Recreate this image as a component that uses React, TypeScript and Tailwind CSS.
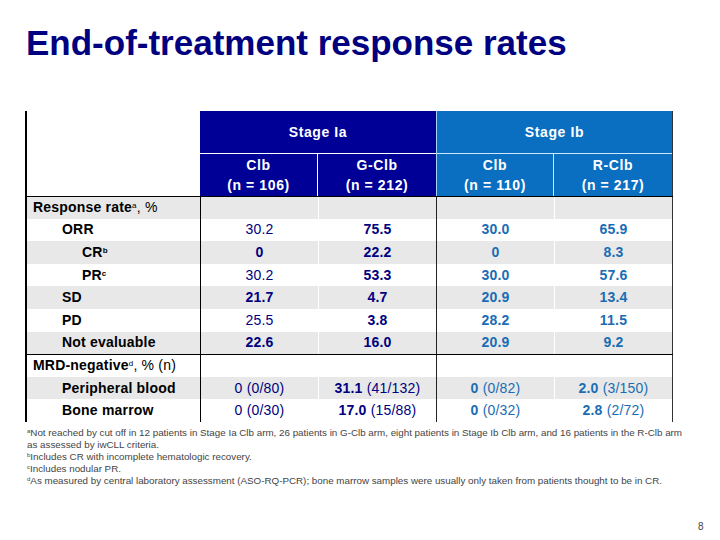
import React from "react";

type Cell = { main: string; sub?: string; bold?: boolean };
type Row = {
  label: React.ReactNode;
  indent: number;
  gray: boolean;
  topLine?: boolean;
  cells: (Cell | null)[];
};

const NAVY = "#000080";
const BLUE = "#1a6db4";

const rows: Row[] = [
  {
    label: (
      <>
        <span className="font-bold">Response rate</span>
        <sup className="text-[8px]">a</sup>, %
      </>
    ),
    indent: 6,
    gray: true,
    topLine: true,
    cells: [null, null, null, null],
  },
  {
    label: <span className="font-bold">ORR</span>,
    indent: 35,
    gray: false,
    cells: [{ main: "30.2" }, { main: "75.5", bold: true }, { main: "30.0", bold: true }, { main: "65.9", bold: true }],
  },
  {
    label: (
      <>
        <span className="font-bold">CR</span>
        <sup className="text-[8px] font-bold">b</sup>
      </>
    ),
    indent: 55,
    gray: true,
    cells: [{ main: "0", bold: true }, { main: "22.2", bold: true }, { main: "0", bold: true }, { main: "8.3", bold: true }],
  },
  {
    label: (
      <>
        <span className="font-bold">PR</span>
        <sup className="text-[8px] font-bold">c</sup>
      </>
    ),
    indent: 55,
    gray: false,
    cells: [{ main: "30.2" }, { main: "53.3", bold: true }, { main: "30.0", bold: true }, { main: "57.6", bold: true }],
  },
  {
    label: <span className="font-bold">SD</span>,
    indent: 35,
    gray: true,
    cells: [{ main: "21.7", bold: true }, { main: "4.7", bold: true }, { main: "20.9", bold: true }, { main: "13.4", bold: true }],
  },
  {
    label: <span className="font-bold">PD</span>,
    indent: 35,
    gray: false,
    cells: [{ main: "25.5" }, { main: "3.8", bold: true }, { main: "28.2", bold: true }, { main: "11.5", bold: true }],
  },
  {
    label: <span className="font-bold">Not evaluable</span>,
    indent: 35,
    gray: true,
    cells: [{ main: "22.6", bold: true }, { main: "16.0", bold: true }, { main: "20.9", bold: true }, { main: "9.2", bold: true }],
  },
  {
    label: (
      <>
        <span className="font-bold">MRD-negative</span>
        <sup className="text-[8px]">d</sup>, % (n)
      </>
    ),
    indent: 6,
    gray: false,
    topLine: true,
    cells: [null, null, null, null],
  },
  {
    label: <span className="font-bold">Peripheral blood</span>,
    indent: 35,
    gray: true,
    cells: [
      { main: "0", sub: " (0/80)" },
      { main: "31.1", sub: " (41/132)", bold: true },
      { main: "0", sub: " (0/82)", bold: true },
      { main: "2.0", sub: " (3/150)", bold: true },
    ],
  },
  {
    label: <span className="font-bold">Bone marrow</span>,
    indent: 35,
    gray: false,
    cells: [
      { main: "0", sub: " (0/30)" },
      { main: "17.0", sub: " (15/88)", bold: true },
      { main: "0", sub: " (0/32)", bold: true },
      { main: "2.8", sub: " (2/72)", bold: true },
    ],
  },
];

function DataCell({ cell, idx, gray }: { cell: Cell | null; idx: number; gray: boolean }) {
  const borders = [
    "border-l border-black",
    "border-l border-white",
    "border-l border-[#222]",
    "border-l border-white border-r border-r-[#333]",
  ][idx];
  const width = idx === 3 ? "w-[119px]" : "w-[118px]";
  const color = idx < 2 ? NAVY : BLUE;
  return (
    <div
      className={`${width} ${borders} ${gray ? "bg-[#e8e8e8]" : "bg-white"} flex h-full items-center justify-center text-[14px] tracking-[0.2px]`}
      style={{ color }}
    >
      {cell && (
        <span>
          <span className={cell.bold ? "font-bold" : "font-normal"}>{cell.main}</span>
          {cell.sub && <span className="font-normal">{cell.sub}</span>}
        </span>
      )}
    </div>
  );
}

function Fn({ mark, children }: { mark: string; children: React.ReactNode }) {
  return (
    <p>
      <span className="relative top-[-3px] text-[6px] leading-none">{mark}</span>
      {children}
    </p>
  );
}

export default function App() {
  return (
    <div
      className="relative h-[540px] w-[720px] overflow-hidden bg-white text-black"
      style={{ fontFamily: '"Liberation Sans", Arial, sans-serif' }}
    >
      <h1
        className="pl-[26px] pt-[24px] text-[35px] font-bold leading-[38px] tracking-[0px] text-[#000080]"
        style={{ fontFamily: '"Liberation Sans Narrow", "Arial Narrow", "Liberation Sans", sans-serif' }}
      >
        End-of-treatment response rates
      </h1>

      <div className="ml-[25px] mt-[49px] w-[648px] border-l-2 border-black">
        {/* header */}
        <div className="flex h-[85px] text-[14px] font-bold tracking-[0.6px] text-white">
          <div className="w-[173px] bg-white" />
          <div className="flex w-[236px] flex-col bg-[#000096]">
            <div className="flex h-[43px] items-center justify-center border-b border-white pt-[1px]">Stage Ia</div>
            <div className="flex flex-1">
              <div className="flex w-[118px] flex-col items-center justify-center border-r border-white leading-[20px]">
                <span>Clb</span>
                <span>(n = 106)</span>
              </div>
              <div className="flex flex-1 flex-col items-center justify-center leading-[20px]">
                <span>G-Clb</span>
                <span>(n = 212)</span>
              </div>
            </div>
          </div>
          <div className="flex w-[237px] flex-col border-l border-l-[#9dd3f5] border-r border-r-[#333] bg-[#0a6fc0]">
            <div className="flex h-[43px] items-center justify-center border-b border-[#cfe9fb] pt-[1px]">Stage Ib</div>
            <div className="flex flex-1">
              <div className="flex w-[117px] flex-col items-center justify-center border-r border-[#cfe9fb] leading-[20px]">
                <span>Clb</span>
                <span>(n = 110)</span>
              </div>
              <div className="flex flex-1 flex-col items-center justify-center leading-[20px]">
                <span>R-Clb</span>
                <span>(n = 217)</span>
              </div>
            </div>
          </div>
        </div>

        {/* body */}
        {rows.map((r, i) => (
          <div
            key={i}
            className={`flex h-[22.6px] ${r.topLine ? "border-t border-black" : ""}`}
          >
            <div
              className={`flex w-[173px] items-center text-[14px] tracking-[0.2px] ${r.gray ? "bg-[#e8e8e8]" : "bg-white"}`}
              style={{ paddingLeft: r.indent }}
            >
              <span className="whitespace-nowrap">{r.label}</span>
            </div>
            {r.cells.map((c, j) => (
              <DataCell key={j} cell={c} idx={j} gray={r.gray} />
            ))}
          </div>
        ))}
      </div>

      <div className="ml-[27px] mt-[5px] w-[668px] text-[9.8px] leading-[12px] text-[#444]">
        <Fn mark="a">
          Not reached by cut off in 12 patients in Stage Ia Clb arm, 26 patients in G-Clb arm, eight patients in Stage Ib Clb arm, and 16 patients in the R-Clb arm as assessed by iwCLL criteria.
        </Fn>
        <Fn mark="b">Includes CR with incomplete hematologic recovery.</Fn>
        <Fn mark="c">Includes nodular PR.</Fn>
        <Fn mark="d">
          As measured by central laboratory assessment (ASO-RQ-PCR); bone marrow samples were usually only taken from patients thought to be in CR.
        </Fn>
      </div>

      <div className="absolute left-[698px] top-[519px] text-[10px] text-[#444]">8</div>
    </div>
  );
}
